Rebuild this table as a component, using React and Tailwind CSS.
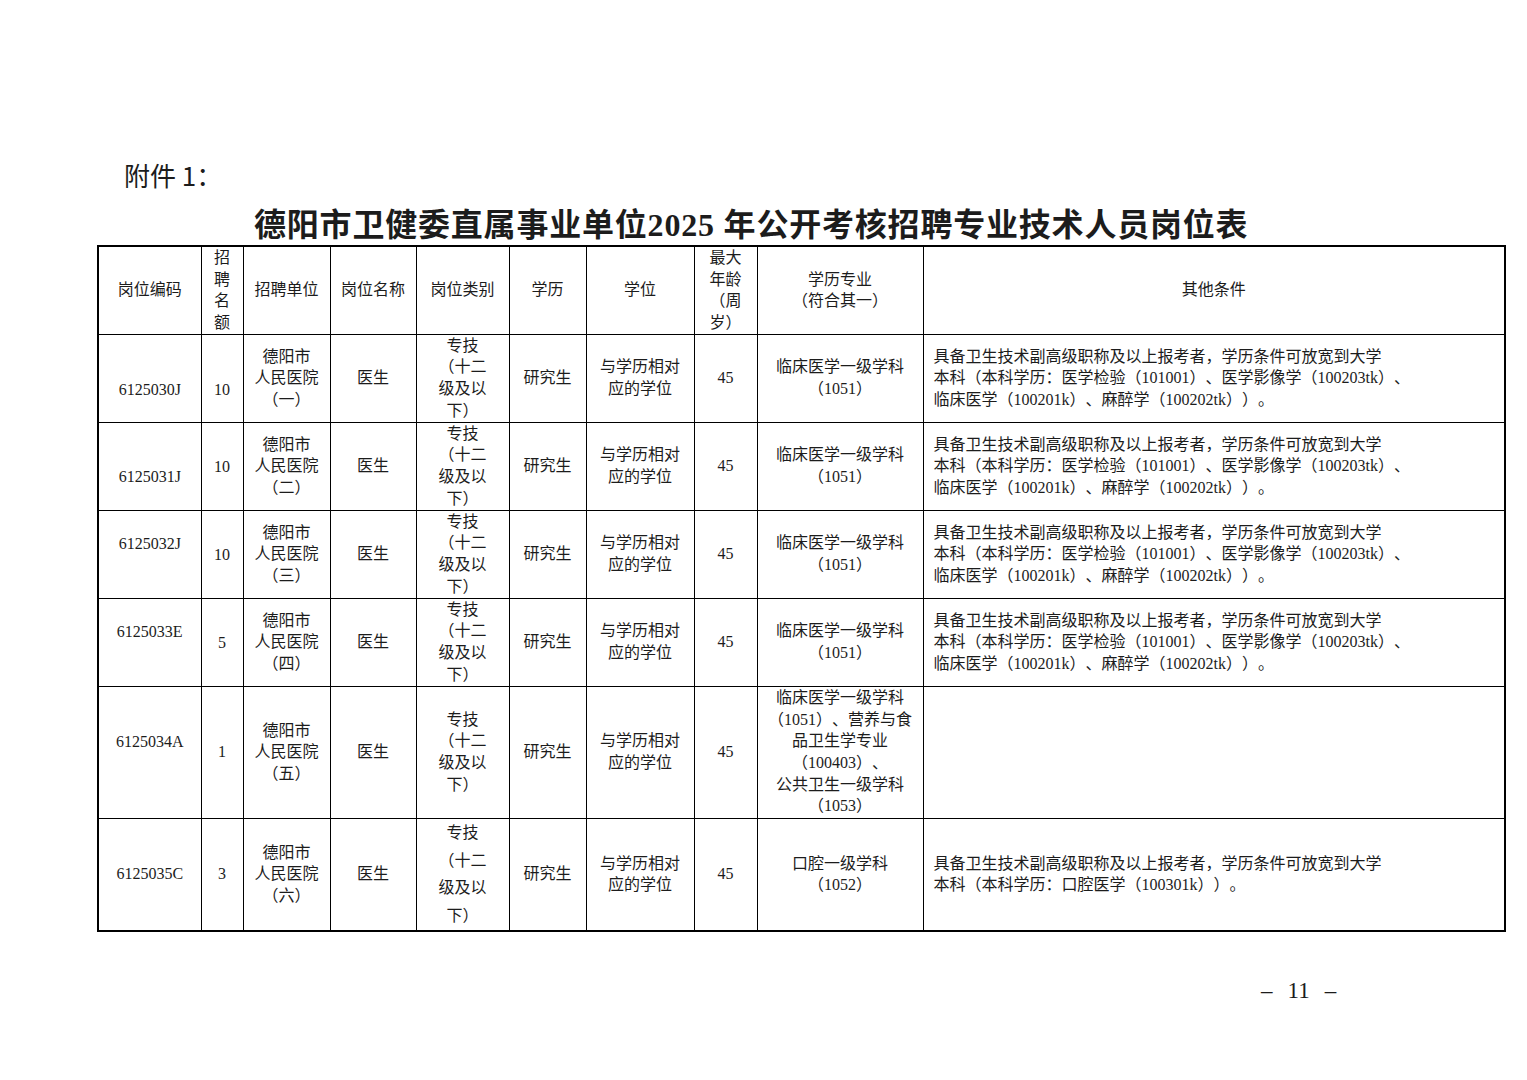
import React from 'react';

const FONT = { fontFamily: '"Liberation Serif", "Noto Sans CJK SC", serif' };

const cond = (
  <>
    具备卫生技术副高级职称及以上报考者，学历条件可放宽到大学
    <br />
    本科（本科学历：医学检验（101001）、医学影像学（100203tk）、
    <br />
    临床医学（100201k）、麻醉学（100202tk））。
  </>
);

const rows = [
  { code: '6125030J', codePad: 'pt-[24px]', num: '10', numPad: 'pt-[24px]', unit: '（一）', major: <>临床医学一级学科<br />（1051）</>, other: cond, h: 'h-[88px]' },
  { code: '6125031J', codePad: 'pt-[22px]', num: '10', numPad: 'pt-[2px]', unit: '（二）', major: <>临床医学一级学科<br />（1051）</>, other: cond, h: 'h-[88px]' },
  { code: '6125032J', codePad: 'pb-[20px]', num: '10', numPad: 'pt-[2px]', unit: '（三）', major: <>临床医学一级学科<br />（1051）</>, other: cond, h: 'h-[88px]' },
  { code: '6125033E', codePad: 'pb-[20px]', num: '5', numPad: 'pt-[2px]', unit: '（四）', major: <>临床医学一级学科<br />（1051）</>, other: cond, h: 'h-[88px]' },
  {
    code: '6125034A', codePad: 'pb-[20px]', num: '1', numPad: '', unit: '（五）',
    major: <>临床医学一级学科<br />（1051）、营养与食<br />品卫生学专业<br />（100403）、<br />公共卫生一级学科<br />（1053）</>,
    other: null, h: 'h-[132px]'
  },
  {
    code: '6125035C', codePad: '', num: '3', numPad: '', unit: '（六）', loose: true,
    major: <>口腔一级学科<br />（1052）</>,
    other: <>具备卫生技术副高级职称及以上报考者，学历条件可放宽到大学<br />本科（本科学历：口腔医学（100301k））。</>,
    h: 'h-[113px]'
  }
];

const td = 'border border-black align-middle text-center p-0';

export default function App() {
  return (
    <div className="w-[1527px] h-[1080px] bg-white text-[#1c1c1c] [text-spacing-trim:space-all]" style={FONT}>
      <div className="pt-[160px] pl-[124px] text-[26px] leading-[30px]" style={{ fontFamily: '"Noto Sans CJK SC", sans-serif' }}>
        附件 1：
      </div>
      <div className="pt-[15px] pl-[254px] text-[32px] leading-[40px] font-bold tracking-[0.8px]">
        德阳市卫健委直属事业单位2025 年公开考核招聘专业技术人员岗位表
      </div>
      <div className="pl-[97px] pt-0">
        <table className="table-fixed border-collapse border-2 border-black w-[1407px] text-[16px] leading-[21.6px]">
          <colgroup>
            <col className="w-[103px]" />
            <col className="w-[42px]" />
            <col className="w-[87px]" />
            <col className="w-[86px]" />
            <col className="w-[93px]" />
            <col className="w-[77px]" />
            <col className="w-[108px]" />
            <col className="w-[63px]" />
            <col className="w-[166px]" />
            <col className="w-[582px]" />
          </colgroup>
          <tbody>
            <tr className="h-[88px]">
              <td className={td}>岗位编码</td>
              <td className={td}>招<br />聘<br />名<br />额</td>
              <td className={td}>招聘单位</td>
              <td className={td}>岗位名称</td>
              <td className={td}>岗位类别</td>
              <td className={td}>学历</td>
              <td className={td}>学位</td>
              <td className={td}>最大<br />年龄<br />（周<br />岁）</td>
              <td className={td}>学历专业<br />（符合其一）</td>
              <td className={td}>其他条件</td>
            </tr>
            {rows.map((r) => (
              <tr key={r.code} className={r.h}>
                <td className={`${td} ${r.codePad}`}>{r.code}</td>
                <td className={`${td} ${r.numPad}`}>{r.num}</td>
                <td className={td}>德阳市<br />人民医院<br />{r.unit}</td>
                <td className={td}>医生</td>
                <td className={`${td} ${r.loose ? 'leading-[27.6px]' : ''}`}>专技<br />（十二<br />级及以<br />下）</td>
                <td className={td}>研究生</td>
                <td className={td}>与学历相对<br />应的学位</td>
                <td className={td}>45</td>
                <td className={td}>{r.major}</td>
                <td className={`${td} !text-left pl-[10px]`}>{r.other}</td>
              </tr>
            ))}
          </tbody>
        </table>
      </div>
      <div className="pt-[46px] pl-[1261px] flex items-center gap-[15px] text-[23px] leading-[26px]">
        <span>–</span>
        <span>11</span>
        <span>–</span>
      </div>
    </div>
  );
}
